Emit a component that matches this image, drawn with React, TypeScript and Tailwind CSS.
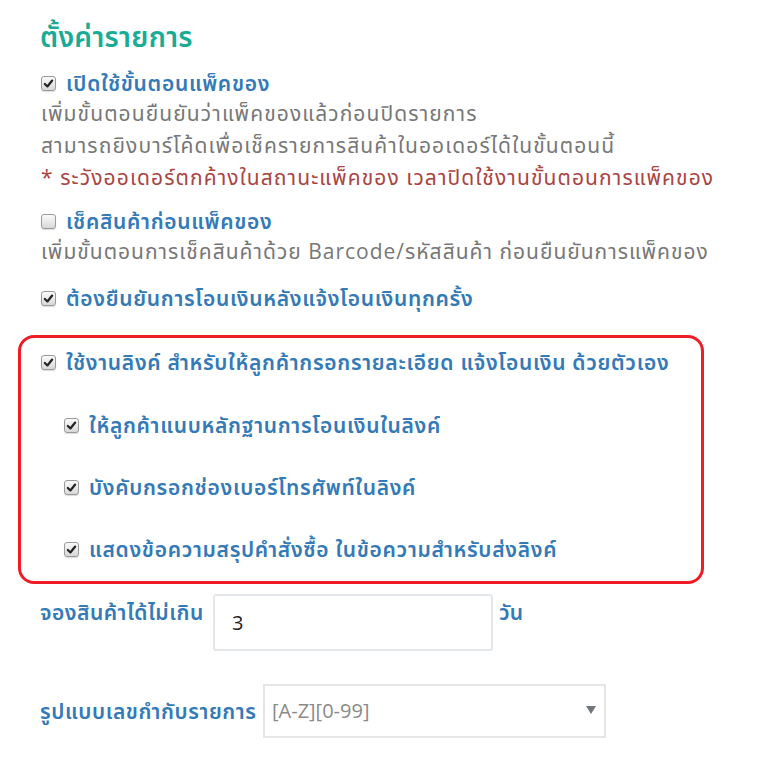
import { useState } from 'react'

const thai = 'font-["Open_Sans","Noto_Sans_Thai","Noto_Sans","DejaVu_Sans",sans-serif]'

function Check({ checked }: { checked: boolean }) {
  return (
    <span className="inline-flex h-[15px] w-[15px] shrink-0 items-center justify-center rounded-[3px] border border-[#9a9a9a] bg-gradient-to-b from-[#fafafa] to-[#d8d8d8] shadow-[0_1px_1px_rgba(0,0,0,0.15)]">
      {checked && (
        <svg viewBox="0 0 12 12" className="h-[11px] w-[11px]">
          <path d="M2 6.5 L4.8 9.2 L10 2.8" fill="none" stroke="#222" strokeWidth="2.4" strokeLinecap="round" strokeLinejoin="round" />
        </svg>
      )}
    </span>
  )
}

function Option({ checked, label }: { checked: boolean; label: string }) {
  return (
    <div className="flex items-center gap-[10px]">
      <Check checked={checked} />
      <span className="text-[21px] font-semibold leading-[28px] tracking-[0.7px] text-[#337ab7]">{label}</span>
    </div>
  )
}

export default function App() {
  const [days] = useState('3')

  return (
    <div className={`${thai} bg-white px-10 pt-[18px] pb-6 w-[766px] h-[761px]`}>
      <h3 className="text-[28px] font-semibold leading-[36px] tracking-[0.3px] text-[#1aab96]">ตั้งค่ารายการ</h3>

      <div className="mt-[15px] pl-[1px]">
        <Option checked label="เปิดใช้ขั้นตอนแพ็คของ" />
        <div className="text-[21px] leading-[32px] tracking-[1.1px] text-[#777]">
          <p>เพิ่มขั้นตอนยืนยันว่าแพ็คของแล้วก่อนปิดรายการ</p>
          <p>สามารถยิงบาร์โค้ดเพื่อเช็ครายการสินค้าในออเดอร์ได้ในขั้นตอนนี้</p>
          <p className="text-[#a94442]">* ระวังออเดอร์ตกค้างในสถานะแพ็คของ เวลาปิดใช้งานขั้นตอนการแพ็คของ</p>
        </div>
      </div>

      <div className="mt-[14px] pl-[1px]">
        <Option checked={false} label="เช็คสินค้าก่อนแพ็คของ" />
        <p className="text-[21px] leading-[32px] tracking-[1px] text-[#777]">เพิ่มขั้นตอนการเช็คสินค้าด้วย Barcode/รหัสสินค้า ก่อนยืนยันการแพ็คของ</p>
      </div>

      <div className="mt-[17px] pl-[1px]">
        <Option checked label="ต้องยืนยันการโอนเงินหลังแจ้งโอนเงินทุกครั้ง" />
      </div>

      <div className="-ml-[22px] mt-[23px] w-[686px] rounded-[16px] border-[3px] border-[#ee1c25] pl-[20px] pt-[10px] pb-[18px]">
        <Option checked label="ใช้งานลิงค์ สำหรับให้ลูกค้ากรอกรายละเอียด แจ้งโอนเงิน ด้วยตัวเอง" />
        <div className="mt-[35px] flex flex-col gap-[34px] pl-[23px]">
          <Option checked label="ให้ลูกค้าแนบหลักฐานการโอนเงินในลิงค์" />
          <Option checked label="บังคับกรอกช่องเบอร์โทรศัพท์ในลิงค์" />
          <Option checked label="แสดงข้อความสรุปคำสั่งซื้อ ในข้อความสำหรับส่งลิงค์" />
        </div>
      </div>

      <div className="mt-[10px] flex items-start">
        <label className="mt-[4px] w-[173px] text-[21px] font-semibold leading-[28px] tracking-[0.5px] text-[#337ab7]">จองสินค้าได้ไม่เกิน</label>
        <input
          value={days}
          readOnly
          className="h-[57px] w-[280px] rounded-[3px] border-2 border-[#e3e6ea] px-[17px] text-[20px] text-[#222] outline-none"
        />
        <span className="ml-[6px] mt-[4px] text-[21px] font-semibold leading-[28px] text-[#337ab7]">วัน</span>
      </div>

      <div className="mt-[33px] flex items-center">
        <label className="w-[223px] text-[21px] font-semibold leading-[28px] tracking-[0.6px] text-[#337ab7]">รูปแบบเลขกำกับรายการ</label>
        <div className="relative flex h-[54px] w-[343px] items-center border-2 border-[#e5e5e5] pl-[7px]">
          <span className="text-[20px] text-[#8a8a8a]">[A-Z][0-99]</span>
          <span className="absolute right-[8px] top-[20px] h-0 w-0 border-x-[5px] border-t-[8px] border-x-transparent border-t-[#71757c]" />
        </div>
      </div>
    </div>
  )
}
